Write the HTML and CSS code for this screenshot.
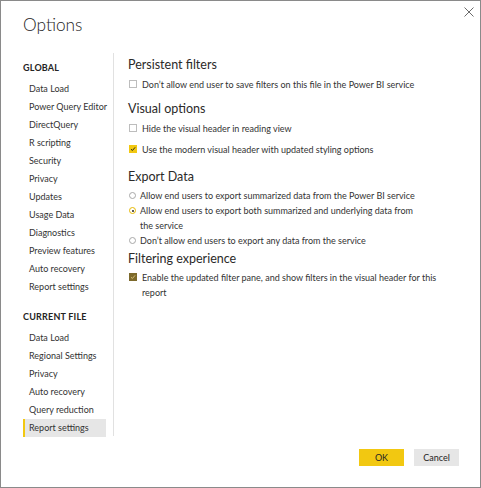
FILE: index.html
```html
<!DOCTYPE html>
<html>
<head>
<meta charset="utf-8">
<link rel="stylesheet" href="styles.css">
</head>
<body>
<div class="dialog">
  <div class="title-bar">
    <h1 class="title">Options</h1>
    <svg class="close" width="10" height="10" viewBox="0 0 10 10"><path d="M0.5 0.5 L9.5 9.5 M9.5 0.5 L0.5 9.5" stroke="#6b6b6b" stroke-width="1" fill="none"/></svg>
  </div>
  <div class="main">
    <nav class="nav">
      <div class="nav-head">GLOBAL</div>
      <div class="nav-item">Data Load</div>
      <div class="nav-item">Power Query Editor</div>
      <div class="nav-item">DirectQuery</div>
      <div class="nav-item">R scripting</div>
      <div class="nav-item">Security</div>
      <div class="nav-item">Privacy</div>
      <div class="nav-item">Updates</div>
      <div class="nav-item">Usage Data</div>
      <div class="nav-item">Diagnostics</div>
      <div class="nav-item">Preview features</div>
      <div class="nav-item">Auto recovery</div>
      <div class="nav-item">Report settings</div>
      <div class="nav-head nav-head-2">CURRENT FILE</div>
      <div class="nav-item">Data Load</div>
      <div class="nav-item">Regional Settings</div>
      <div class="nav-item">Privacy</div>
      <div class="nav-item">Auto recovery</div>
      <div class="nav-item">Query reduction</div>
      <div class="nav-item selected">Report settings</div>
    </nav>
    <div class="divider"></div>
    <section class="content">
      <h2 class="sec-head first">Persistent filters</h2>
      <div class="opt"><span class="box"></span><span class="label">Don’t allow end user to save filters on this file in the Power BI service</span></div>

      <h2 class="sec-head">Visual options</h2>
      <div class="opt"><span class="box"></span><span class="label">Hide the visual header in reading view</span></div>
      <div class="opt opt-gap"><span class="box checked"><svg width="8" height="8" viewBox="0 0 8 8"><path d="M1.3 4.2 L3.2 6 L6.8 1.8" stroke="#252423" stroke-width="1.3" fill="none"/></svg></span><span class="label">Use the modern visual header with updated styling options</span></div>

      <h2 class="sec-head export">Export Data</h2>
      <div class="radio-opt"><span class="radio"></span><span class="label">Allow end users to export summarized data from the Power BI service</span></div>
      <div class="radio-opt"><span class="radio on"></span><span class="label">Allow end users to export both summarized and underlying data from<br>the service</span></div>
      <div class="radio-opt"><span class="radio"></span><span class="label">Don’t allow end users to export any data from the service</span></div>

      <h2 class="sec-head filter">Filtering experience</h2>
      <div class="opt"><span class="box dim"><svg width="8" height="8" viewBox="0 0 8 8"><path d="M1.3 4.2 L3.2 6 L6.8 1.8" stroke="#d9c27a" stroke-width="1.3" fill="none"/></svg></span><span class="label">Enable the updated filter pane, and show filters in the visual header for this<br>report</span></div>
    </section>
  </div>
  <div class="footer">
    <button class="btn ok">OK</button>
    <button class="btn cancel">Cancel</button>
  </div>
</div>
</body>
</html>
```
FILE: styles.css
```css
html, body {
  margin: 0;
  padding: 0;
  background: #ffffff;
}
body {
  font-family: "Lato", "Open Sans", sans-serif;
  color: #333333;
}
.dialog {
  width: 481px;
  height: 488px;
  box-sizing: border-box;
  border: 1px solid #8a8a8a;
  display: flex;
  flex-direction: column;
  position: relative;
}
.title-bar {
  height: 56px;
  position: relative;
}
.title {
  margin: 0;
  padding: 12px 0 0 22px;
  font-size: 17.3px;
  line-height: 24px;
  font-weight: 300;
  color: #252423;
}
.close {
  position: absolute;
  top: 6px;
  left: 463px;
}
.main {
  display: flex;
  align-items: flex-start;
}
.nav {
  width: 83px;
  margin-left: 22px;
  padding-top: 1.5px;
}
.nav-head {
  font-size: 9px;
  font-weight: 700;
  line-height: 18px;
  color: #252423;
  margin-bottom: 3px;
  letter-spacing: 0.2px;
}
.nav-head-2 {
  margin-top: 12px;
}
.nav-item {
  font-size: 9px;
  line-height: 18px;
  height: 18px;
  padding-left: 6px;
  color: #333333;
  white-space: nowrap;
  box-sizing: border-box;
}
.nav-item.selected {
  background: #e6e6e6;
  border-left: 2px solid #f2c811;
  padding-left: 4px;
}
.divider {
  width: 1px;
  height: 383px;
  background: #e1e1e1;
  margin-left: 7px;
  margin-top: -4px;
}
.content {
  margin-left: 14px;
  flex: 1;
}
.sec-head {
  margin: 9.5px 0 0 0;
  font-size: 12.5px;
  line-height: 16px;
  font-weight: 400;
  color: #2b2a29;
}
.sec-head.first {
  margin-top: 0;
}
.sec-head.export {
  margin-top: 12px;
}
.sec-head.filter {
  margin-top: 2.5px;
}
.opt {
  display: flex;
  align-items: flex-start;
  margin-top: 3.5px;
}
.sec-head.filter + .opt {
  margin-top: 3px;
}
.opt-gap {
  margin-top: 6px;
}
.label {
  font-size: 9px;
  line-height: 15px;
  white-space: nowrap;
  color: #333333;
}
.box {
  width: 8px;
  height: 8px;
  border: 1px solid #bdbdbd;
  box-sizing: border-box;
  margin: 3.5px 5px 0 1px;
  flex: none;
  display: flex;
  align-items: center;
  justify-content: center;
  background: #fff;
}
.box svg {
  display: block;
}
.box.checked {
  background: #f2c811;
  border-color: #f2c811;
}
.box.dim {
  background: #7d6a2c;
  border-color: #7d6a2c;
}
.radio-opt {
  display: flex;
  align-items: flex-start;
}
.sec-head.export + .radio-opt {
  margin-top: 3.5px;
}
.radio {
  width: 7px;
  height: 7px;
  border-radius: 50%;
  border: 1px solid #a8a8a8;
  box-sizing: border-box;
  margin: 4px 4px 0 1px;
  flex: none;
  position: relative;
}
.radio.on {
  border-color: #e6b800;
  background: #fff;
}
.radio.on::after {
  content: "";
  position: absolute;
  left: 1.5px;
  top: 1.5px;
  width: 2px;
  height: 2px;
  border-radius: 50%;
  background: #252423;
}
.footer {
  margin-top: auto;
  display: flex;
  justify-content: flex-end;
  gap: 10px;
  padding: 0 21px 21px 0;
}
.btn {
  width: 45px;
  height: 17px;
  border: none;
  padding: 0;
  font-family: "Lato", "Open Sans", sans-serif;
  font-size: 9px;
  color: #252423;
}
.btn.ok {
  background: #f2c811;
}
.btn.cancel {
  background: #e6e6e6;
}
```
